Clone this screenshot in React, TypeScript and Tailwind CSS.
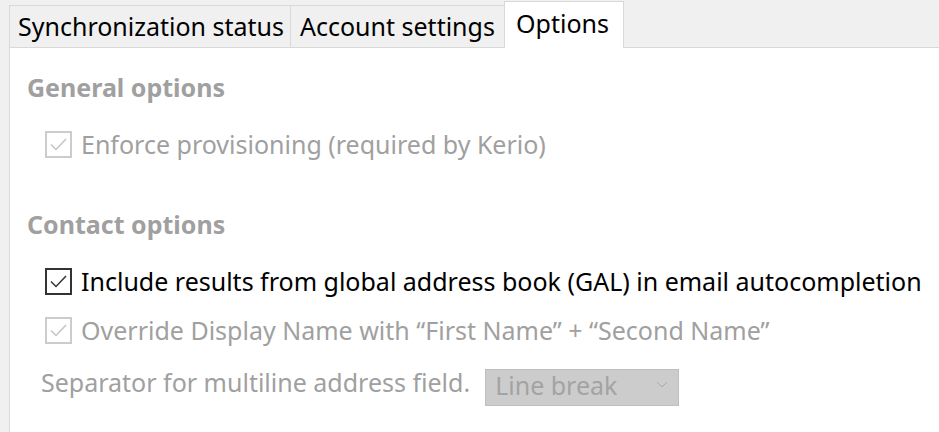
import type { ReactNode } from "react";

function Check({ disabled }: { disabled?: boolean }) {
  const stroke = disabled ? "#c4c4c4" : "#333333";
  return (
    <span
      className={`flex h-[27px] w-[27px] shrink-0 items-center justify-center border-2 bg-white ${
        disabled ? "border-[#cccccc]" : "border-[#333333]"
      }`}
    >
      <svg width="19" height="19" viewBox="0 0 19 19" fill="none">
        <path d="M2 9.5 L7 14.5 L17 4" stroke={stroke} strokeWidth="1.5" />
      </svg>
    </span>
  );
}

function Option({ disabled, children, className = "" }: { disabled?: boolean; children: ReactNode; className?: string }) {
  return (
    <div className={`flex h-[32px] items-center gap-[9px] pl-[35px] ${className}`}>
      <Check disabled={disabled} />
      <span className={`whitespace-nowrap text-[25px] ${disabled ? "text-[#a0a0a0]" : "text-black"}`}>{children}</span>
    </div>
  );
}

export default function App() {
  return (
    <div className="h-[432px] w-[939px] overflow-hidden bg-[#f0f0f0] font-['Noto_Sans',sans-serif] leading-none">
      <div className="flex h-[48px] items-end pl-[9px]">
        <div className="flex h-[43px] w-[281px] items-center border-b border-l border-t border-[#d9d9d9] pl-[8px] text-[25px] text-black">
          Synchronization status
        </div>
        <div className="flex h-[43px] w-[214px] items-center border-b border-l border-t border-[#d9d9d9] pl-[9px] text-[25px] text-black">
          Account settings
        </div>
        <div className="flex h-[47px] w-[120px] items-center border-l border-r border-t border-[#d9d9d9] bg-white pb-[4px] pl-[11px] text-[25px] text-black">
          Options
        </div>
        <div className="flex-1 border-b border-[#d9d9d9]" />
      </div>
      <div className="ml-[9px] h-[384px] border-l border-[#d9d9d9] bg-white">
        <div className="box-content flex h-[32px] items-center pl-[17px] pt-[23px] text-[25px] font-bold text-[#a0a0a0]">
          General options
        </div>
        <Option disabled className="mt-[25px]">
          Enforce provisioning (required by Kerio)
        </Option>
        <div className="mt-[48px] flex h-[32px] items-center pl-[17px] text-[25px] font-bold text-[#a0a0a0]">
          Contact options
        </div>
        <Option className="mt-[25px]">
          Include results from global address book (GAL) in email autocompletion
        </Option>
        <Option disabled className="mt-[17px]">
          Override Display Name with “First Name” + “Second Name”
        </Option>
        <div className="mt-[23px] flex items-start pl-[31px]">
          <span className="whitespace-nowrap pt-[1px] text-[25px] text-[#a0a0a0]">Separator for multiline address field.</span>
          <div className="ml-[15px] flex h-[37px] w-[194px] items-center justify-between border border-[#bfbfbf] bg-[#cccccc] pl-[9px] pr-[10px]">
            <span className="pb-[4px] text-[25px] text-[#a3a3a3]">Line break</span>
            <svg width="12" height="8" viewBox="0 0 12 8" fill="none" className="mb-[6px]">
              <path d="M1 1 L6 6 L11 1" stroke="#a8a8a8" strokeWidth="1" />
            </svg>
          </div>
        </div>
      </div>
    </div>
  );
}
